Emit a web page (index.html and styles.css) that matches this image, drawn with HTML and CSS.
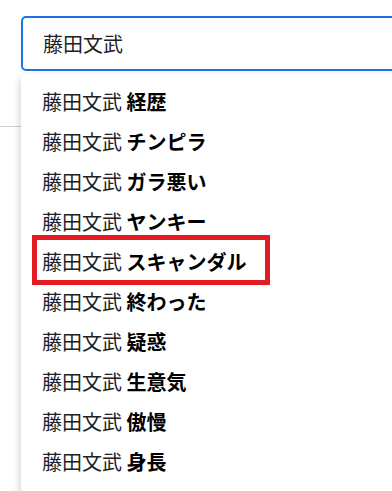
FILE: index.html
```html
<!DOCTYPE html>
<html lang="ja">
<head>
<meta charset="utf-8">
<link rel="stylesheet" href="styles.css">
</head>
<body>
<div class="page">
  <div class="header">
    <div class="search">
      <div class="input">藤田文武</div>
      <ul class="suggest">
        <li>藤田文武 <b>経歴</b></li>
        <li>藤田文武 <b>チンピラ</b></li>
        <li>藤田文武 <b>ガラ悪い</b></li>
        <li>藤田文武 <b>ヤンキー</b></li>
        <li class="mark">藤田文武 <b>スキャンダル</b></li>
        <li>藤田文武 <b>終わった</b></li>
        <li>藤田文武 <b>疑惑</b></li>
        <li>藤田文武 <b>生意気</b></li>
        <li>藤田文武 <b>傲慢</b></li>
        <li>藤田文武 <b>身長</b></li>
      </ul>
    </div>
  </div>
</div>
</body>
</html>
```
FILE: styles.css
```css
html, body {
  margin: 0;
  padding: 0;
  background: #fff;
}
body {
  font-family: "Noto Sans CJK JP", "Noto Sans", sans-serif;
  color: #202124;
}
.page {
  position: relative;
  width: 392px;
  height: 491px;
  overflow: hidden;
}
.header {
  height: 127px;
  border-bottom: 1px solid #d0d0d0;
  box-sizing: border-box;
  padding: 16px 0 0 21px;
}
.search {
  position: relative;
  margin-right: -12px;
}
.input {
  height: 55px;
  box-sizing: border-box;
  border: 2px solid #1a73e8;
  border-radius: 5px;
  padding-left: 20px;
  font-size: 20px;
  line-height: 51px;
  color: #202124;
}
.suggest {
  position: absolute;
  top: 58px;
  left: 0;
  right: 0;
  margin: 0;
  padding: 8px 0 20px;
  list-style: none;
  background: #fff;
  border-radius: 6px;
  box-shadow: 0 4px 10px rgba(0, 0, 0, 0.22);
}
.suggest li {
  position: relative;
  height: 40px;
  line-height: 40px;
  padding-left: 21px;
  font-size: 20px;
  white-space: nowrap;
}
.suggest b {
  font-weight: 700;
  color: #000;
}
.mark::after {
  content: "";
  position: absolute;
  left: 11px;
  top: -7px;
  width: 238px;
  height: 50px;
  box-sizing: border-box;
  border: 5px solid #e31b23;
}
```
